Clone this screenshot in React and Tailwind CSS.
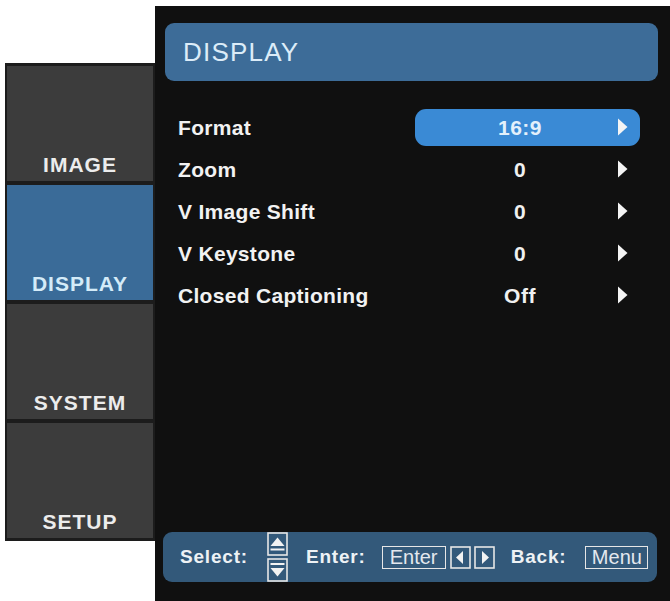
import React from 'react';

const font = { fontFamily: '"Liberation Sans", Arial, sans-serif' };

const tabs = [
    { label: 'IMAGE', active: false },
    { label: 'DISPLAY', active: true },
    { label: 'SYSTEM', active: false },
    { label: 'SETUP', active: false },
];

const rows = [
    { label: 'Format', value: '16:9', selected: true },
    { label: 'Zoom', value: '0' },
    { label: 'V Image Shift', value: '0' },
    { label: 'V Keystone', value: '0' },
    { label: 'Closed Captioning', value: 'Off' },
];

function Arrow() {
    return (
        <svg width="11" height="18" viewBox="0 0 11 18" className="shrink-0">
            <path d="M1 0.5 L10.5 9 L1 17.5 Z" fill="#f4f4f4" />
        </svg>
    );
}

function UpDownKeys() {
    return (
        <svg width="21" height="50" viewBox="0 0 21 50" className="shrink-0">
            <rect x="1" y="1" width="19" height="22" fill="none" stroke="#e6e6e6" strokeWidth="1.6" />
            <path d="M3.5 14 L10.5 5.5 L17.5 14 Z" fill="#f2f2f2" />
            <rect x="3.5" y="16.5" width="14" height="2" fill="#f2f2f2" />
            <rect x="1" y="27" width="19" height="22" fill="none" stroke="#e6e6e6" strokeWidth="1.6" />
            <rect x="3.5" y="31" width="14" height="2" fill="#f2f2f2" />
            <path d="M3.5 36 L10.5 44.5 L17.5 36 Z" fill="#f2f2f2" />
        </svg>
    );
}

function ArrowKey({ dir }) {
    return (
        <svg width="21" height="23" viewBox="0 0 21 23" className="shrink-0">
            <rect x="1" y="1" width="19" height="21" fill="none" stroke="#e6e6e6" strokeWidth="1.6" />
            {dir === 'left'
                ? <path d="M13 5 L6 11.5 L13 18 Z" fill="#f2f2f2" />
                : <path d="M8 5 L15 11.5 L8 18 Z" fill="#f2f2f2" />}
        </svg>
    );
}

function KeyBox({ children, width }) {
    return (
        <div
            className={`h-[23px] ${width} border-[1.6px] border-[#e6e6e6] flex items-center justify-center text-[20px] leading-none text-[#e4e8ee]`}>
            {children}
        </div>
    );
}

export default function App() {
    return (
        <div className="w-[670px] h-[601px] bg-white flex flex-row overflow-hidden" style={font}>
            <div className="w-[155px] shrink-0 pt-[63px] pl-[5px]">
                <div className="bg-[#1c1c1c] pt-[3px] pb-[3px] pl-[2px] pr-[2px] flex flex-col gap-[4px]">
                    {tabs.map((t) => (
                        <div
                            key={t.label}
                            className={`h-[115px] flex items-end justify-center pb-[6px] text-[21px] font-bold tracking-[1px] leading-none ${t.active ? 'bg-[#3a6b98] text-[#d4ebf8]' : 'bg-[#3c3c3c] text-[#ececec]'}`}>
                            {t.label}
                        </div>
                    ))}
                </div>
            </div>

            <div className="flex-1 mt-[6px] h-[595px] bg-[#101010] flex flex-col">
                <div className="mt-[17px] ml-[10px] mr-[12px] h-[58px] rounded-[9px] bg-[#3d6c98] flex items-center pl-[18px]">
                    <span className="text-[26px] tracking-[1.2px] text-[#dcecf8] leading-none">DISPLAY</span>
                </div>

                <div className="mt-[25px] flex flex-col">
                    {rows.map((r) => (
                        <div key={r.label} className="h-[42px] flex flex-row items-center">
                            <div className="w-[260px] pl-[23px] text-[21px] font-bold tracking-[0.3px] text-[#f2f2f2] leading-none">
                                {r.label}
                            </div>
                            <div
                                className={`w-[225px] h-[37px] rounded-[11px] flex flex-row items-center ${r.selected ? 'bg-[#3a8ad5]' : ''}`}>
                                <span
                                    className={`ml-[10px] w-[190px] text-center text-[21px] font-bold tracking-[0.5px] leading-none ${r.selected ? 'text-[#e3f0fb]' : 'text-[#f0f0f0]'}`}>
                                    {r.value}
                                </span>
                                <span className="ml-[2px] flex"><Arrow /></span>
                            </div>
                        </div>
                    ))}
                </div>

                <div className="mt-auto mb-[19px] ml-[8px] mr-[13px] h-[50px] rounded-[9px] bg-[#33597a] flex flex-row items-center pl-[17px] text-[19px] font-bold tracking-[0.8px] text-[#eef2f5]">
                    <span>Select:</span>
                    <span className="ml-[19px] flex items-center"><UpDownKeys /></span>
                    <span className="ml-[18px]">Enter:</span>
                    <span className="ml-[16px] font-normal tracking-normal"><KeyBox width="w-[64px]">Enter</KeyBox></span>
                    <span className="ml-[4px] flex"><ArrowKey dir="left" /></span>
                    <span className="ml-[3px] flex"><ArrowKey dir="right" /></span>
                    <span className="ml-[16px]">Back:</span>
                    <span className="ml-[19px] font-normal tracking-normal"><KeyBox width="w-[63px]">Menu</KeyBox></span>
                </div>
            </div>
        </div>
    );
}
